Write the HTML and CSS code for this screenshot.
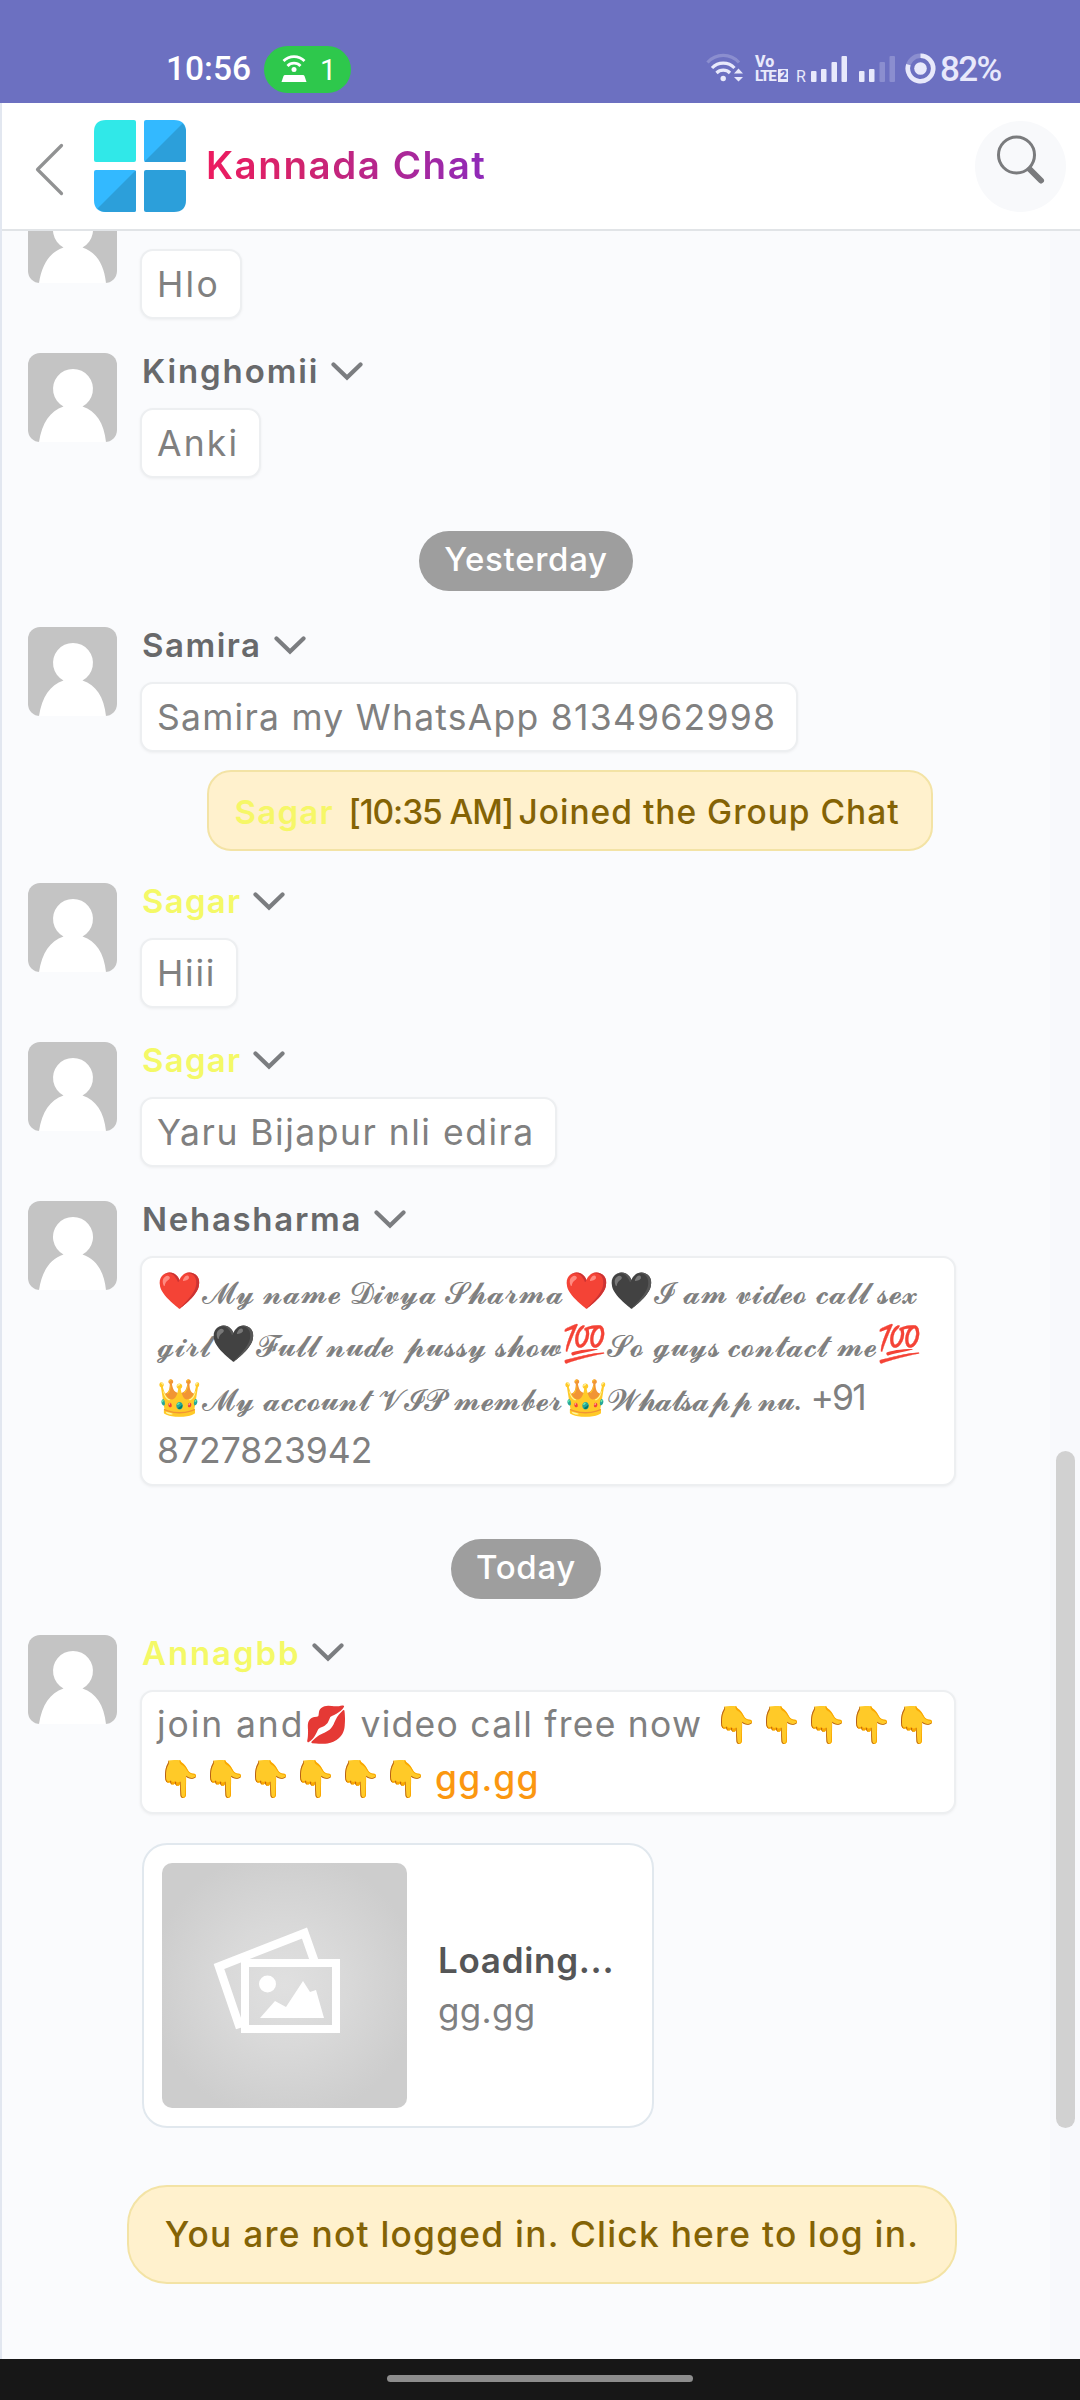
FILE: index.html
```html
<!DOCTYPE html>
<html lang="en">
<head>
<meta charset="utf-8">
<title>Kannada Chat</title>
<link rel="stylesheet" href="styles.css">
</head>
<body>
<svg class="defs" aria-hidden="true">
  <symbol id="person" viewBox="0 0 89 89">
    <rect width="89" height="89" fill="#c4c4c4"/>
    <path d="M11 89C14 70 22 58 35.500 53.500A20 20 0 1 1 54.500 53.500C68 58 76 70 78 89Z" fill="#fff"/>
  </symbol>
  <symbol id="chevron" viewBox="0 0 32 19">
    <path d="M2.500 2.500L16 15.500L29.500 2.500" fill="none" stroke="#7b7d80" stroke-width="4.200" stroke-linecap="round" stroke-linejoin="miter"/>
  </symbol>
</svg>

<div class="status">
  <span class="clock">10:56</span>
  <span class="hotspot">
    <svg width="26" height="30" viewBox="0 0 26 30">
      <g fill="none" stroke="#fff" stroke-width="2.800"><path d="M2.500 7A15 15 0 0 1 23.500 7"/><path d="M6.500 12A9 9 0 0 1 19.500 12"/></g>
      <circle cx="13" cy="15.500" r="2.500" fill="#fff"/>
      <path d="M4 21H22Q23 21 23.500 22L25.500 28H0.500L2.500 22Q3 21 4 21Z" fill="#fff"/>
    </svg>
    <span>1</span>
  </span>
  <svg class="wifi" width="38" height="30" viewBox="0 0 38 30">
    <g fill="none" stroke-width="3.200">
      <path d="M1.500 9.500A21 21 0 0 1 33 9.500" stroke="#8b8ecf"/>
      <path d="M6 15A15.500 15.500 0 0 1 28.500 15" stroke="#e8e9fb"/>
      <path d="M10.500 20A9.500 9.500 0 0 1 24 20" stroke="#e8e9fb"/>
    </g>
    <circle cx="17.200" cy="25.500" r="2.700" fill="#e8e9fb"/>
    <path d="M32.500 15.500L37 20.500H28ZM32.500 28.500L37 24H28Z" fill="#e8e9fb"/>
  </svg>
  <span class="volte"><span>Vo</span><span class="volte-row">LTE<b>2</b></span></span>
  <span class="roam">R</span>
  <svg class="bars" width="86" height="28" viewBox="0 0 86 28" fill="#e8e9fb">
    <rect x="0" y="16" width="5.500" height="11" rx="1"/><rect x="10" y="14" width="5.500" height="13" rx="1"/><rect x="20.500" y="7" width="5.500" height="20" rx="1"/><rect x="30.500" y="1" width="5.500" height="26" rx="1"/>
    <rect x="48" y="16" width="5.500" height="11" rx="1"/><rect x="58" y="14" width="5.500" height="13" rx="1"/>
    <rect x="68.500" y="7" width="5.500" height="20" rx="1" fill="#8b8ecf"/><rect x="78.500" y="1" width="5.500" height="26" rx="1" fill="#8b8ecf"/>
  </svg>
  <svg class="battery" width="31" height="31" viewBox="0 0 31 31">
    <circle cx="15.500" cy="15.500" r="12.700" fill="none" stroke="#8b8ecf" stroke-width="4.600"/>
    <path d="M15.500 2.800A12.700 12.700 0 1 1 3.400 11.600" fill="none" stroke="#e8e9fb" stroke-width="4.600"/>
    <circle cx="15.500" cy="15.500" r="6.300" fill="#e8e9fb"/>
  </svg>
  <span class="percent">82%</span>
</div>

<div class="app">
  <header class="header">
    <svg class="back" width="29" height="53" viewBox="0 0 29 53"><path d="M26.500 2.500L2.500 26.500L26.500 50.500" fill="none" stroke="#919293" stroke-width="3.200" stroke-linecap="round" stroke-linejoin="round"/></svg>
    <svg class="logo" width="92" height="92" viewBox="0 0 92 92">
      <path d="M12 0H40Q42 0 42 2V40Q42 42 40 42H2Q0 42 0 40V12Q0 0 12 0Z" fill="#30e8e8"/>
      <path d="M52 0H80Q92 0 92 12V40Q92 42 90 42H52Q50 42 50 40V2Q50 0 52 0Z" fill="#33b9ff"/>
      <path d="M88.500 3.500Q92 7 92 12V40Q92 42 90 42H52Q51 42 50.500 41.500Z" fill="#2c9fda"/>
      <path d="M2 50H40Q42 50 42 52V90Q42 92 40 92H12Q0 92 0 80V52Q0 50 2 50Z" fill="#33b9ff"/>
      <path d="M41.500 50.500Q42 51 42 52V90Q42 92 40 92H12Q7 92 3.500 88.500Z" fill="#2c9fda"/>
      <path d="M52 50H90Q92 50 92 52V80Q92 92 80 92H52Q50 92 50 90V52Q50 50 52 50Z" fill="#2c9fda"/>
    </svg>
    <h1 class="title">Kannada Chat</h1>
    <span class="search">
      <svg width="50" height="50" viewBox="0 0 50 50" fill="none" stroke="#7a7b7d"><circle cx="20.500" cy="20" r="18" stroke-width="3"/><path d="M34 34.500L45 45.500" stroke-width="6" stroke-linecap="round"/><path d="M32.500 32.500L35 35" stroke-width="4"/></svg>
    </span>
  </header>

  <main class="chat">
    <div class="messages">
      <article class="msg first">
        <svg class="avatar"><use href="#person"/></svg>
        <div class="body">
          <div class="who"></div>
          <div class="bubble"><div class="ls-22">Hlo</div></div>
        </div>
      </article>
      <article class="msg">
        <svg class="avatar"><use href="#person"/></svg>
        <div class="body">
          <div class="who"><span class="ls-19">Kinghomii</span><svg class="down"><use href="#chevron"/></svg></div>
          <div class="bubble"><div class="ls-22">Anki</div></div>
        </div>
      </article>

      <div class="day"><span class="ls-07">Yesterday</span></div>

      <article class="msg">
        <svg class="avatar"><use href="#person"/></svg>
        <div class="body">
          <div class="who"><span class="ls-15">Samira</span><svg class="down"><use href="#chevron"/></svg></div>
          <div class="bubble"><div class="ls-12">Samira my WhatsApp 8134962998</div></div>
        </div>
      </article>

      <div class="system"><b class="ls-12">Sagar</b><span class="time">[10:35 AM]</span><span class="joined">Joined the Group Chat</span></div>

      <article class="msg">
        <svg class="avatar"><use href="#person"/></svg>
        <div class="body">
          <div class="who guest"><span class="ls-12">Sagar</span><svg class="down"><use href="#chevron"/></svg></div>
          <div class="bubble"><div class="ls-17">Hiii</div></div>
        </div>
      </article>
      <article class="msg">
        <svg class="avatar"><use href="#person"/></svg>
        <div class="body">
          <div class="who guest"><span class="ls-12">Sagar</span><svg class="down"><use href="#chevron"/></svg></div>
          <div class="bubble"><div class="ls-15">Yaru Bijapur nli edira</div></div>
        </div>
      </article>
      <article class="msg">
        <svg class="avatar"><use href="#person"/></svg>
        <div class="body">
          <div class="who"><span class="ls-17">Nehasharma</span><svg class="down"><use href="#chevron"/></svg></div>
          <div class="bubble wide">
            <div><i class="em">❤️</i><span class="sc">𝓜𝔂 𝓷𝓪𝓶𝓮 𝓓𝓲𝓿𝔂𝓪 𝓢𝓱𝓪𝓻𝓶𝓪</span><i class="em">❤️🖤</i><span class="sc">𝓘 𝓪𝓶 𝓿𝓲𝓭𝓮𝓸 𝓬𝓪𝓵𝓵 𝓼𝓮𝔁</span></div>
            <div><span class="sc">𝓰𝓲𝓻𝓵</span><i class="em">🖤</i><span class="sc">𝓕𝓾𝓵𝓵 𝓷𝓾𝓭𝓮 𝓹𝓾𝓼𝓼𝔂 𝓼𝓱𝓸𝔀</span><i class="em">💯</i><span class="sc">𝓢𝓸 𝓰𝓾𝔂𝓼 𝓬𝓸𝓷𝓽𝓪𝓬𝓽 𝓶𝓮</span><i class="em">💯</i></div>
            <div><i class="em">👑</i><span class="sc">𝓜𝔂 𝓪𝓬𝓬𝓸𝓾𝓷𝓽 𝓥𝓘𝓟 𝓶𝓮𝓶𝓫𝓮𝓻</span><i class="em">👑</i><span class="sc nu">𝓦𝓱𝓪𝓽𝓼𝓪𝓹𝓹 𝓷𝓾.</span><span class="cc">+91</span></div>
            <div>8727823942</div>
          </div>
        </div>
      </article>

      <div class="day"><span class="ls-07">Today</span></div>

      <article class="msg">
        <svg class="avatar"><use href="#person"/></svg>
        <div class="body">
          <div class="who guest"><span class="ls-19">Annagbb</span><svg class="down"><use href="#chevron"/></svg></div>
          <div class="bubble wide tall">
            <div class="ls-12"><span class="join">join and</span><i class="em">💋</i> video call free now <i class="em">👇👇👇👇👇</i></div>
            <div><i class="em">👇👇👇👇👇👇</i> <a class="link">gg.gg</a></div>
          </div>
          <div class="card">
            <svg class="thumb" viewBox="0 0 245 245">
              <defs><radialGradient id="glow" cx=".5" cy=".5" r=".55"><stop offset="0" stop-color="#e0e0e0"/><stop offset=".45" stop-color="#d9d9d9"/><stop offset="1" stop-color="#cdcdcd"/></radialGradient></defs>
              <rect width="245" height="245" rx="10" fill="url(#glow)"/>
              <path d="M78 165L57 103.500L142.500 70L153 100" fill="none" stroke="#fff" stroke-width="8.500"/>
              <rect x="83" y="100" width="91" height="66" fill="none" stroke="#fff" stroke-width="8"/>
              <circle cx="105.500" cy="121" r="8.500" fill="#fff"/>
              <path d="M98 155L113 138L124 144L141 118L148 129L154 127L162 155Z" fill="#fff"/>
            </svg>
            <div class="card-text"><strong>Loading...</strong><span>gg.gg</span></div>
          </div>
        </div>
      </article>
      <button class="login">You are not logged in. Click here to log in.</button>
    </div>
    <div class="track"><div class="thumbbar"></div></div>
  </main>
</div>
<div class="nav"><span></span></div>
</body>
</html>
```
FILE: styles.css
```css
* { box-sizing: border-box; }
body { margin: 0; width: 1080px; height: 2400px; overflow: hidden; display: flex; flex-direction: column; font-family: Inter, "Noto Sans", sans-serif; background: #fafbfd; color: #7f8081; }
svg { flex: none; display: block; }
.defs { display: none; }

.status { height: 103px; background: #6c70c1; display: flex; align-items: center; padding: 35px 0 0 166px; color: #e8e9fb; font-family: Roboto, sans-serif; }
.clock { width: 98px; color: #fff; font-size: 33.5px; font-weight: 500; line-height: 40px; }
.hotspot { width: 87px; height: 47px; border-radius: 24px; background: #2ec84c; color: #fff; display: flex; align-items: center; padding-left: 17px; font-size: 29px; }
.hotspot span { margin-left: 13px; margin-top: 2px; }
.wifi { margin-left: 355px; margin-top: -2px; }
.volte { margin-left: 11px; width: 31px; display: flex; flex-direction: column; font-size: 16px; font-weight: 800; line-height: 14px; }
.volte-row { display: flex; letter-spacing: -1.3px; font-size: 15px; }
.volte b { width: 10px; height: 13px; margin-left: 3px; background: #e8e9fb; color: #6c70c1; font-size: 12px; line-height: 13px; text-align: center; letter-spacing: 0; flex: none; }
.roam { margin-left: 10px; margin-top: 15px; width: 15px; font-size: 16px; }
.bars { margin-top: -1px; }
.battery { margin-left: 8px; margin-top: -1px; }
.percent { margin-left: 4px; margin-top: 1px; font-size: 35px; letter-spacing: -1.6px; line-height: 40px; font-weight: 500; }

.app { flex: 1; min-height: 0; display: flex; flex-direction: column; border-left: 2px solid #e2e7f0; }
.header { height: 128px; flex: none; display: flex; align-items: center; background: #fff; border-bottom: 2px solid #e1e4e7; padding: 0 14px 0 33px; }
.back { margin-top: 6px; }
.logo { margin-left: 30px; }
.title { margin: -2px 0 0 20px; font-size: 38.5px; font-weight: 600; letter-spacing: 1.55px; line-height: 46px; background: linear-gradient(90deg, #ed1b5f 0%, #d0246f 35%, #8e2aba 100%); -webkit-background-clip: text; background-clip: text; color: transparent; }
.search { width: 91px; height: 91px; border-radius: 50%; margin-left: auto; background: #f8f9fb; display: flex; justify-content: center; padding-top: 14px; }

.chat { flex: 1; min-height: 0; display: grid; grid-template-columns: 1fr 30px; overflow: hidden; }
.messages { display: flex; flex-direction: column; min-width: 0; }
.msg { display: flex; gap: 25px; padding-left: 26px; margin-bottom: 34px; }
.first { margin-top: -37px; }
.avatar { width: 89px; height: 89px; border-radius: 12px; }
.body { display: flex; flex-direction: column; align-items: flex-start; }
.who { height: 36px; margin-bottom: 19px; display: flex; align-items: center; font-size: 33px; font-weight: 600; line-height: 36px; color: #68696b; }
.guest { color: #f4f967; }
.down { width: 32px; height: 19px; margin-left: 12px; }
.bubble { margin-left: -2px; padding: 6px 20px 6px 15px; background: #fff; border: 2px solid #edeff1; border-radius: 13px; box-shadow: 0 1px 3px rgba(0, 0, 0, 0.05); font-size: 35.5px; line-height: 55px; color: #808080; white-space: nowrap; }
.bubble > div { height: 54px; }
.wide { width: 816px; padding-right: 0; line-height: 53.4px; }
.wide > div { height: 53.4px; }
.tall { line-height: 54.3px; }
.tall > div { height: 54.3px; }
.em { font-size: 36px; font-style: normal; line-height: 0; letter-spacing: 0; }
.sc { font-size: 30px; line-height: 0; }
.nu { letter-spacing: -1.5px; }
.cc { margin-left: 10px; letter-spacing: -1.8px; }
.join { letter-spacing: 1.9px; }
.link { color: #fb9710; font-weight: 500; letter-spacing: 1.2px; margin-left: -2px; }

.day { align-self: center; height: 60px; margin: 19px 0 36px; padding: 0 25px 5px; border-radius: 30px; background: #9e9e9e; color: #fff; font-size: 33px; font-weight: 450; line-height: 57px; }
.system { align-self: center; width: 726px; height: 81px; margin: -16px 0 32px 87px; padding: 3px 0 0 26px; display: flex; align-items: center; background: #fff1cd; border: 2px solid #f3e3a5; border-radius: 24px; font-size: 33.5px; font-weight: 450; color: #846305; white-space: nowrap; }
.system b { width: 114px; font-size: 33px; font-weight: 600; color: #f6f767; }
.time { width: 170px; letter-spacing: -1.1px; }
.joined { letter-spacing: 1px; }

.card { width: 512px; height: 285px; margin-top: 29px; display: flex; align-items: center; gap: 31px; padding-left: 18px; background: #fff; border: 2px solid #e1e8ee; border-radius: 25px; }
.thumb { width: 245px; height: 245px; }
.card-text { display: flex; flex-direction: column; font-size: 35px; line-height: 50px; padding-bottom: 2px; }
.card-text strong { color: #555657; font-weight: 600; letter-spacing: 0.7px; }
.card-text span { letter-spacing: 0.3px; }

.login { align-self: center; width: 830px; height: 99px; margin: 23px 0 0 32px; padding: 0; background: #fff1cd; border: 2px solid #f3e3a5; border-radius: 40px; font: 450 35.3px Inter, sans-serif; letter-spacing: 1.25px; color: #846305; white-space: nowrap; }
.track { background: #f8f9fc; padding: 1220px 5px 0 6px; }
.thumbbar { height: 677px; border-radius: 10px; background: #d1d1d1; }

.nav { height: 41px; flex: none; background: #171717; display: flex; justify-content: center; padding-top: 16px; }
.nav span { width: 306px; height: 7px; border-radius: 4px; background: #8d8d8d; }

.ls-07 { letter-spacing: 0.7px; }
.ls-12 { letter-spacing: 1.25px; }
.ls-15 { letter-spacing: 1.5px; }
.ls-17 { letter-spacing: 1.7px; }
.ls-19 { letter-spacing: 1.9px; }
.ls-22 { letter-spacing: 2.2px; }
```
